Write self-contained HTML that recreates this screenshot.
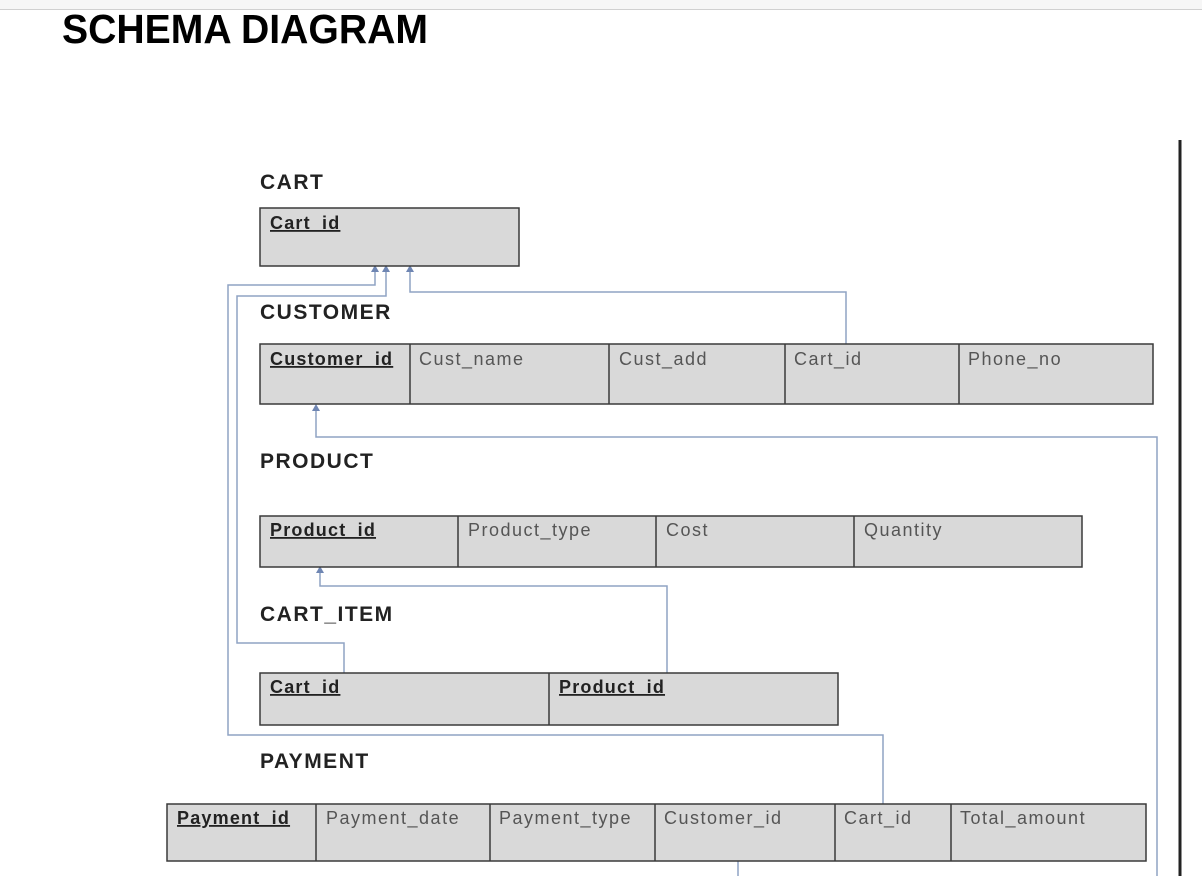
<!DOCTYPE html>
<html><head><meta charset="utf-8"><style>
html,body{margin:0;padding:0;background:#fff;width:1202px;height:876px;overflow:hidden}
svg{display:block}
text{font-family:"Liberation Sans",sans-serif}
.h{font-weight:bold;font-size:21px;fill:#222;letter-spacing:1.5px}
.c{font-size:18px;fill:#555;letter-spacing:1.5px}
.k{font-size:18px;fill:#222;font-weight:bold;text-decoration:underline;letter-spacing:1.2px}
.t{fill:#d9d9d9;stroke:#3a3a3a;stroke-width:1.5}
.v{stroke:#3a3a3a;stroke-width:1.5}
.l{fill:none;stroke:#8fa3c4;stroke-width:1.5}
</style></head><body>
<svg width="1202" height="876" viewBox="0 0 1202 876">
<rect x="0" y="0" width="1202" height="9" fill="#f6f6f6"/>
<line x1="0" y1="9.5" x2="1202" y2="9.5" stroke="#d0d0d0"/>
<text x="62" y="43" font-size="41" font-weight="bold" fill="#000" textLength="366" lengthAdjust="spacingAndGlyphs">SCHEMA DIAGRAM</text>
<line x1="1180" y1="140" x2="1180" y2="876" stroke="#222" stroke-width="3"/>

<polyline class="l" points="375,268 375,285 228,285 228,735 883,735 883,804"/>
<polyline class="l" points="386,268 386,296 237,296 237,643 344,643 344,673"/>
<polyline class="l" points="410,268 410,292 846,292 846,344"/>
<polyline class="l" points="316,407 316,437 1157,437 1157,876"/>
<polyline class="l" points="320,569 320,586 667,586 667,673"/>
<line class="l" x1="738" y1="861" x2="738" y2="876"/>
<g fill="#6f86b3">
<path d="M371,272 L375,265 L379,272Z"/><path d="M382,272 L386,265 L390,272Z"/><path d="M406,272 L410,265 L414,272Z"/>
<path d="M312,411 L316,404 L320,411Z"/><path d="M316,573 L320,566 L324,573Z"/>
</g>

<text class="h" x="260" y="189">CART</text>
<rect class="t" x="260" y="208" width="259" height="58"/>
<text class="k" x="270" y="229">Cart_id</text>

<text class="h" x="260" y="319">CUSTOMER</text>
<rect class="t" x="260" y="344" width="893" height="60"/>
<line class="v" x1="410" y1="344" x2="410" y2="404"/><line class="v" x1="609" y1="344" x2="609" y2="404"/>
<line class="v" x1="785" y1="344" x2="785" y2="404"/><line class="v" x1="959" y1="344" x2="959" y2="404"/>
<text class="k" x="270" y="365">Customer_id</text>
<text class="c" x="419" y="365">Cust_name</text>
<text class="c" x="619" y="365">Cust_add</text>
<text class="c" x="794" y="365">Cart_id</text>
<text class="c" x="968" y="365">Phone_no</text>

<text class="h" x="260" y="468">PRODUCT</text>
<rect class="t" x="260" y="516" width="822" height="51"/>
<line class="v" x1="458" y1="516" x2="458" y2="567"/><line class="v" x1="656" y1="516" x2="656" y2="567"/>
<line class="v" x1="854" y1="516" x2="854" y2="567"/>
<text class="k" x="270" y="536">Product_id</text>
<text class="c" x="468" y="536">Product_type</text>
<text class="c" x="666" y="536">Cost</text>
<text class="c" x="864" y="536">Quantity</text>

<text class="h" x="260" y="621">CART_ITEM</text>
<rect class="t" x="260" y="673" width="578" height="52"/>
<line class="v" x1="549" y1="673" x2="549" y2="725"/>
<text class="k" x="270" y="693">Cart_id</text>
<text class="k" x="559" y="693">Product_id</text>

<text class="h" x="260" y="768">PAYMENT</text>
<rect class="t" x="167" y="804" width="979" height="57"/>
<line class="v" x1="316" y1="804" x2="316" y2="861"/><line class="v" x1="490" y1="804" x2="490" y2="861"/>
<line class="v" x1="655" y1="804" x2="655" y2="861"/><line class="v" x1="835" y1="804" x2="835" y2="861"/>
<line class="v" x1="951" y1="804" x2="951" y2="861"/>
<text class="k" x="177" y="824">Payment_id</text>
<text class="c" x="326" y="824" letter-spacing="0.8">Payment_date</text>
<text class="c" x="499" y="824" letter-spacing="0.6">Payment_type</text>
<text class="c" x="664" y="824">Customer_id</text>
<text class="c" x="844" y="824">Cart_id</text>
<text class="c" x="960" y="824">Total_amount</text>
</svg>
</body></html>
